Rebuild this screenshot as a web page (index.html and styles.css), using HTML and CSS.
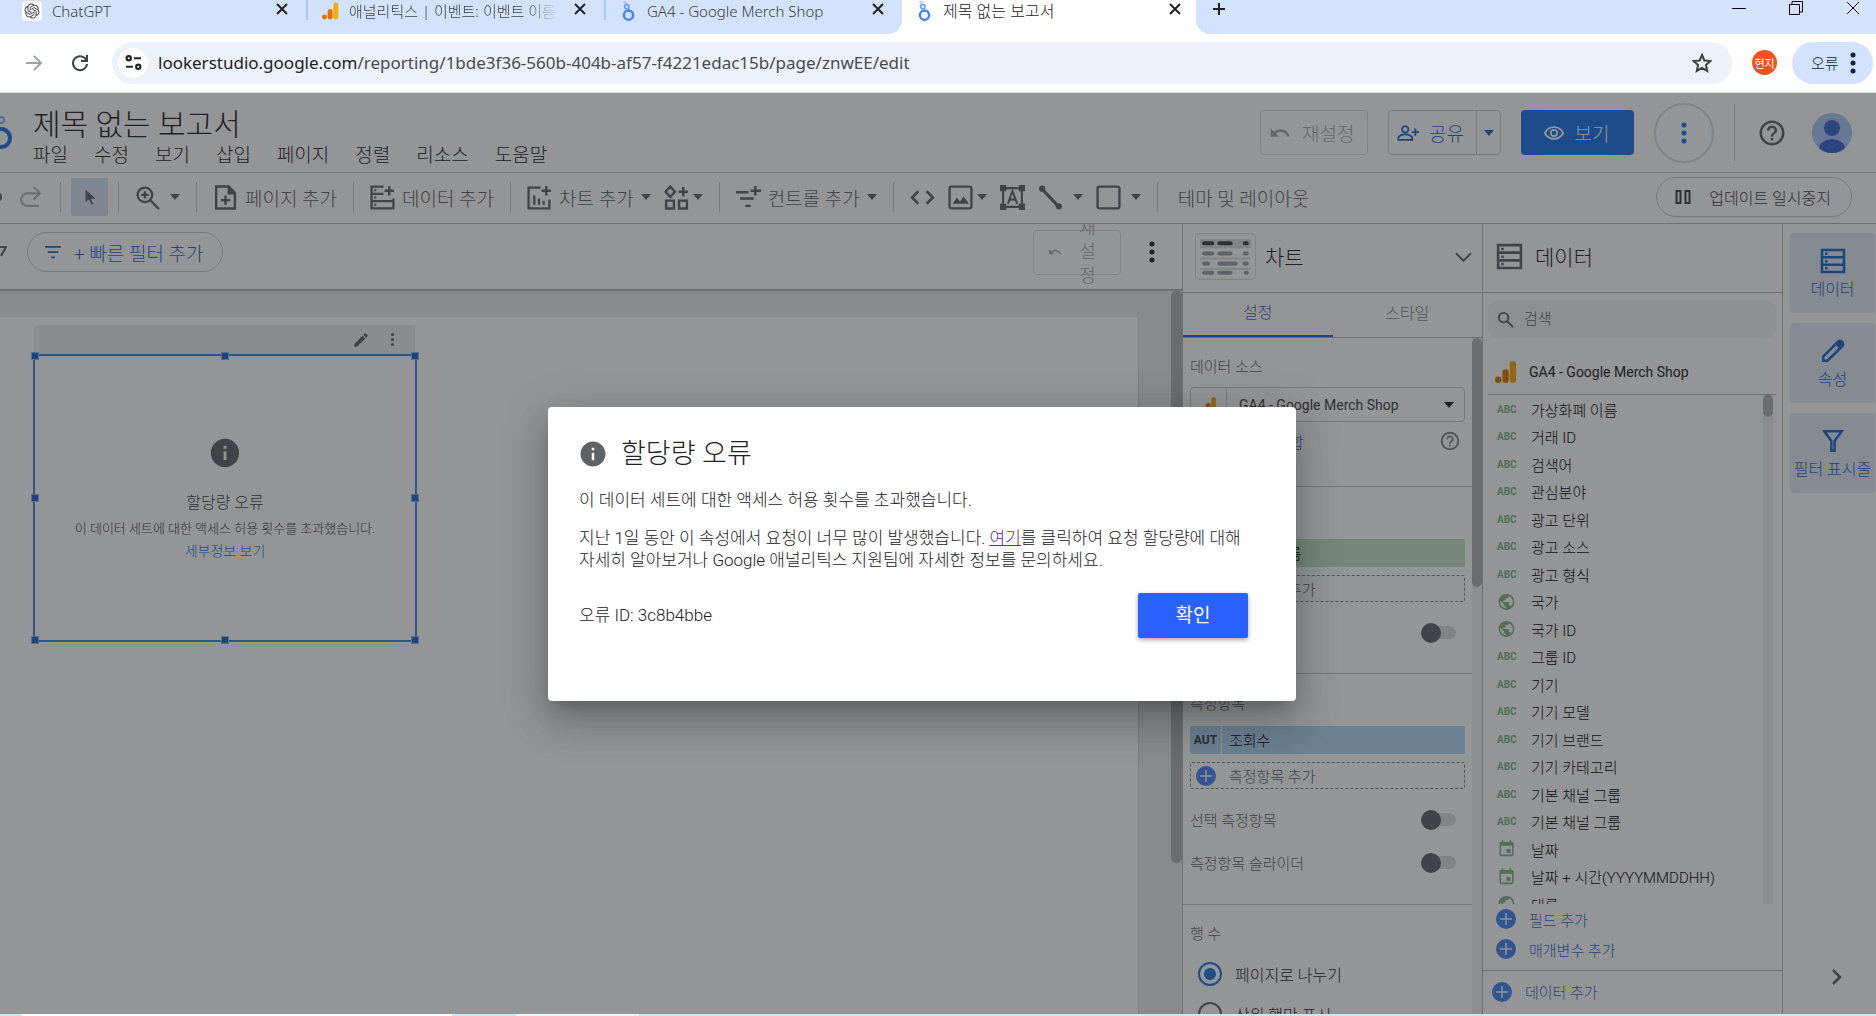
FILE: index.html
```html
<!DOCTYPE html>
<html lang="ko">
<head>
  <meta charset="UTF-8">
  <title>제목 없는 보고서</title>
  <link rel="stylesheet" href="styles.css">
</head>
<body>
  <svg class="sprite" aria-hidden="true">
    <symbol id="close" viewBox="0 0 14 14"><path d="M2 2l10 10M12 2L2 12" fill="none" stroke="currentColor" stroke-width="2"/></symbol>
    <symbol id="looker" viewBox="0 0 16 24"><g fill="none" stroke="#4285f4"><circle cx="8" cy="17" r="5.500" stroke-width="3"/><circle cx="6" cy="7" r="2.600" stroke-width="2" stroke="#669df6"/><circle cx="4" cy="1.500" r="1.500" stroke-width="1.200" stroke="#8ab4f8"/></g></symbol>
    <symbol id="analytics" viewBox="0 0 24 24"><rect x="16" y="0" width="7" height="24" rx="3.5" fill="#f9ab00"/><rect x="8" y="9" width="7" height="15" rx="3.5" fill="#e37400"/><circle cx="3.5" cy="20.5" r="3.5" fill="#e37400"/></symbol>
    <symbol id="dots" viewBox="0 0 6 24"><circle cx="3" cy="4" r="2.5"/><circle cx="3" cy="12" r="2.5"/><circle cx="3" cy="20" r="2.5"/></symbol>
    <symbol id="undo" viewBox="0 0 24 24"><path d="M12.5 8c-2.65 0-5.05.99-6.9 2.6L2 7v9h9l-3.62-3.62c1.39-1.16 3.16-1.88 5.12-1.88 3.54 0 6.55 2.31 7.6 5.5l2.37-.78C21.08 11.03 17.15 8 12.5 8z"/></symbol>
    <symbol id="help" viewBox="0 0 24 24"><path d="M11 18h2v-2h-2v2zm1-16C6.48 2 2 6.48 2 12s4.48 10 10 10 10-4.480 10-10S17.520 2 12 2zm0 18c-4.410 0-8-3.590-8-8s3.590-8 8-8 8 3.590 8 8-3.590 8-8 8zm0-14c-2.210 0-4 1.790-4 4h2c0-1.100.9-2 2-2s2 .9 2 2c0 2-3 1.750-3 5h2c0-2.250 3-2.500 3-5 0-2.210-1.790-4-4-4z"/></symbol>
    <symbol id="info" viewBox="0 0 24 24"><path d="M12 2C6.48 2 2 6.480 2 12s4.480 10 10 10 10-4.480 10-10S17.520 2 12 2zm1 15h-2v-6h2v6zm0-8h-2V7h2v2z"/></symbol>
    <symbol id="rows" viewBox="0 0 26 26"><path d="M2 2h22v22H2zM2 9.300h22M2 16.700h22" fill="none" stroke="currentColor" stroke-width="2.500"/><path d="M5 4.500h2.500v2.500H5zM5 12h2.500v2.500H5zM5 19h2.500v2.500H5z"/></symbol>
    <symbol id="plus" viewBox="0 0 20 20"><circle cx="10" cy="10" r="10"/><path d="M10 4v12M4 10h12" stroke="#fff" stroke-width="1.500"/></symbol>
    <symbol id="globe" viewBox="0 0 24 24"><path d="M12 2C6.480 2 2 6.480 2 12s4.480 10 10 10 10-4.480 10-10S17.520 2 12 2zm-1 17.930c-3.950-.49-7-3.850-7-7.930 0-.62.08-1.210.21-1.790L9 15v1c0 1.100.9 2 2 2v1.930zm6.900-2.540c-.26-.81-1-1.390-1.900-1.390h-1v-3c0-.55-.45-1-1-1H8v-2h2c.55 0 1-.45 1-1V7h2c1.100 0 2-.9 2-2v-.41c2.930 1.190 5 4.060 5 7.410 0 2.080-.8 3.970-2.100 5.390z"/></symbol>
    <symbol id="date" viewBox="0 0 24 24"><path d="M17 12h-5v5h5v-5zM16 1v2H8V1H6v2H5c-1.110 0-1.990.9-1.990 2L3 19c0 1.100.89 2 2 2h14c1.100 0 2-.9 2-2V5c0-1.100-.9-2-2-2h-1V1h-2zm3 18H5V8h14v11z"/></symbol>
    <symbol id="filter" viewBox="0 0 20 16"><path d="M1 2h18M4 8h12M8 14h4" fill="none" stroke="currentColor" stroke-width="2"/></symbol>
    <symbol id="pencil" viewBox="0 0 24 24"><path d="M3 17.250V21h3.750L17.810 9.940l-3.750-3.750L3 17.250zM20.710 7.040a1 1 0 0 0 0-1.410l-2.340-2.340a1 1 0 0 0-1.410 0l-1.830 1.830 3.750 3.750 1.830-1.830z"/></symbol>
  </svg>

  <div class="tab-strip">
    <div class="tab">
      <svg class="gpt-icon" viewBox="-4 -4 32 32"><path d="M22.2819 9.8211a5.9847 5.9847 0 0 0-.5157-4.9108 6.0462 6.0462 0 0 0-6.5098-2.9A6.0651 6.0651 0 0 0 4.9807 4.1818a5.9847 5.9847 0 0 0-3.9977 2.9 6.0462 6.0462 0 0 0 .7427 7.0966 5.98 5.98 0 0 0 .511 4.9107 6.051 6.051 0 0 0 6.5146 2.9001A5.9847 5.9847 0 0 0 13.2599 24a6.0557 6.0557 0 0 0 5.7718-4.2058 5.9894 5.9894 0 0 0 3.9977-2.9001 6.0557 6.0557 0 0 0-.7475-7.0729zm-9.022 12.6081a4.4755 4.4755 0 0 1-2.8764-1.0408l.1419-.0804 4.7783-2.7582a.7948.7948 0 0 0 .3927-.6813v-6.7369l2.02 1.1686a.071.071 0 0 1 .038.052v5.5826a4.504 4.504 0 0 1-4.4945 4.4944zm-9.6607-4.1254a4.4708 4.4708 0 0 1-.5346-3.0137l.142.0852 4.783 2.7582a.7712.7712 0 0 0 .7806 0l5.8428-3.3685v2.3324a.0804.0804 0 0 1-.0332.0615L9.74 19.9502a4.4992 4.4992 0 0 1-6.1408-1.6464zM2.3408 7.8956a4.485 4.485 0 0 1 2.3655-1.9728V11.6a.7664.7664 0 0 0 .3879.6765l5.8144 3.3543-2.0201 1.1685a.0757.0757 0 0 1-.071 0l-4.8303-2.7865A4.504 4.504 0 0 1 2.3408 7.872zm16.5963 3.8558L13.1038 8.364 15.1192 7.2a.0757.0757 0 0 1 .071 0l4.8303 2.7913a4.4944 4.4944 0 0 1-.6765 8.1042v-5.6772a.79.79 0 0 0-.407-.667zm2.0107-3.0231l-.142-.0852-4.7735-2.7818a.7759.7759 0 0 0-.7854 0L9.409 9.2297V6.8974a.0662.0662 0 0 1 .0284-.0615l4.8303-2.7866a4.4992 4.4992 0 0 1 6.6802 4.66zM8.3065 12.863l-2.02-1.1638a.0804.0804 0 0 1-.038-.0567V6.0742a4.4992 4.4992 0 0 1 7.3757-3.4537l-.142.0805L8.704 5.459a.7948.7948 0 0 0-.3927.6813zm1.0976-2.3654l2.602-1.4998 2.6069 1.4998v2.9994l-2.5974 1.4997-2.6067-1.4997Z"/></svg>
      <span class="tab-title">ChatGPT</span>
      <button class="tab-close" aria-label="닫기"><svg><use href="#close"/></svg></button>
    </div>
    <div class="tab divided">
      <svg class="tab-icon"><use href="#analytics"/></svg>
      <span class="tab-title fade">애널리틱스 | 이벤트: 이벤트 이름</span>
      <button class="tab-close" aria-label="닫기"><svg><use href="#close"/></svg></button>
    </div>
    <div class="tab divided">
      <svg class="tab-icon"><use href="#looker"/></svg>
      <span class="tab-title">GA4 - Google Merch Shop</span>
      <button class="tab-close" aria-label="닫기"><svg><use href="#close"/></svg></button>
    </div>
    <div class="tab active">
      <svg class="tab-icon"><use href="#looker"/></svg>
      <span class="tab-title">제목 없는 보고서</span>
      <button class="tab-close" aria-label="닫기"><svg><use href="#close"/></svg></button>
    </div>
    <button class="new-tab" aria-label="새 탭"><svg viewBox="0 0 14 14"><path d="M7 1v12M1 7h12" stroke="currentColor" stroke-width="2"/></svg></button>
    <div class="window-buttons">
      <svg viewBox="0 0 14 14"><path d="M0 7.500h14" stroke="#000"/></svg>
      <svg viewBox="0 0 14 14"><path d="M.5 3.500h10v10H.5zM3 3V.500h10.500V11H11" fill="none" stroke="#000"/></svg>
      <svg viewBox="0 0 14 14"><path d="M1 1l12 12M13 1L1 13" stroke="#000"/></svg>
    </div>
  </div>

  <div class="address-row">
    <button class="nav-button forward" aria-label="앞으로"><svg viewBox="0 0 18 18"><path d="M1 9h15M9 2l7 7-7 7" fill="none" stroke="currentColor" stroke-width="2"/></svg></button>
    <button class="nav-button" aria-label="새로고침"><svg viewBox="0 0 18 18"><path d="M15.500 6.500A7 7 0 1 0 16 10M16 1v6h-6" fill="none" stroke="currentColor" stroke-width="2"/></svg></button>
    <div class="omnibox">
      <span class="site-info"><svg viewBox="0 0 16 16"><g fill="none" stroke="#202124" stroke-width="2"><circle cx="3.500" cy="4" r="2"/><path d="M8.500 4H15M1 12h6.500"/><circle cx="12.500" cy="12" r="2"/></g></svg></span>
      <span class="url"><b>lookerstudio.google.com</b>/reporting/1bde3f36-560b-404b-af57-f4221edac15b/page/znwEE/edit</span>
      <svg class="star" viewBox="0 0 20 20"><path d="M10 2l2.400 5.500 6 .5-4.500 4 1.300 5.900L10 14.800l-5.200 3.100L6.100 12 1.600 8l6-.5z" fill="none" stroke="#3c4043" stroke-width="2"/></svg>
    </div>
    <span class="profile">현지</span>
    <button class="error-menu">오류 <svg class="dots"><use href="#dots"/></svg></button>
  </div>

  <div class="app">
    <header class="header">
      <svg class="logo" viewBox="0 0 12 34"><g fill="none" stroke="#1a73e8"><circle cx="1" cy="22" r="9" stroke-width="4"/><circle cx="1" cy="4" r="3" stroke-width="2" stroke="#8ab4f8"/></g></svg>
      <div class="title-block">
        <h1>제목 없는 보고서</h1>
        <nav class="menu">
          <a href="#">파일</a><a href="#">수정</a><a href="#">보기</a><a href="#">삽입</a><a href="#">페이지</a><a href="#">정렬</a><a href="#">리소스</a><a href="#">도움말</a>
        </nav>
      </div>
      <button class="outline-button reset"><svg class="icon"><use href="#undo"/></svg>재설정</button>
      <div class="share">
        <button class="share-main"><svg class="icon" viewBox="0 0 24 24"><g fill="none" stroke="currentColor" stroke-width="2"><circle cx="9" cy="8" r="3.500"/><path d="M1.500 19.500v-2c0-2.500 4-4 7.500-4s7.500 1.500 7.500 4v2zM20 7v8M16 11h8"/></g></svg>공유</button>
        <button class="share-more" aria-label="공유 옵션"><i class="caret"></i></button>
      </div>
      <button class="view-button"><svg class="icon" viewBox="0 0 24 24"><g fill="none" stroke="currentColor" stroke-width="2"><path d="M2 12c2-4 5.500-6.500 10-6.500S20 8 22 12c-2 4-5.500 6.500-10 6.500S4 16 2 12z"/><circle cx="12" cy="12" r="3.500"/></g></svg>보기</button>
      <button class="more-button" aria-label="더보기"><svg class="dots"><use href="#dots"/></svg></button>
      <div class="account">
        <svg class="help"><use href="#help"/></svg>
        <svg class="avatar" viewBox="0 0 40 40"><clipPath id="round"><circle cx="20" cy="20" r="20"/></clipPath><g clip-path="url(#round)"><path fill="#a8c7fa" d="M0 0h40v40H0z"/><circle cx="20" cy="15" r="8" fill="#3b66d1"/><ellipse cx="20" cy="36" rx="13" ry="10" fill="#3b66d1"/></g></svg>
      </div>
    </header>

    <div class="toolbar">
      <div class="group history">
        <svg class="undo-edge" viewBox="0 0 2 8"><path d="M0 0c1.500 1 2 2.500 2 4s-.5 3-2 4z"/></svg>
        <button class="tool disabled" aria-label="다시 실행"><svg viewBox="0 0 24 24"><path d="M21 8H9a6 6 0 0 0 0 12h11M15 2l6 6-6 6" fill="none" stroke="currentColor" stroke-width="2"/></svg></button>
      </div>
      <div class="group pointer">
        <button class="tool selected" aria-label="선택"><svg viewBox="0 0 24 24"><path d="M6 2l13 12-6 .5 3.500 6.500-2.500 1-3.300-7L6 19z"/></svg></button>
      </div>
      <div class="group">
        <button class="tool loose" aria-label="확대"><svg viewBox="0 0 24 24"><g fill="none" stroke="currentColor" stroke-width="2.200"><circle cx="9.500" cy="9.500" r="7"/><path d="M15 15l8 8M9.500 6v7M6 9.500h7"/></g></svg><i class="caret"></i></button>
      </div>
      <div class="group">
        <button class="tool"><svg viewBox="0 0 24 24"><path d="M3 1.500h12l6 6v15H3zM12 10v9M7.500 14.500h9" fill="none" stroke="currentColor" stroke-width="2.300"/><path d="M14 1v8h7z"/></svg>페이지 추가</button>
      </div>
      <div class="group">
        <button class="tool"><svg viewBox="0 0 24 24"><path d="M13 1.500H1.500v21h21V13M1.500 8.500H13M1.500 15.500h21M18.500 1v9M14 5.500h9" fill="none" stroke="currentColor" stroke-width="2.200"/><path d="M4 4h2v2H4zM4 11h2v2H4zM4 18h2v2H4z"/></svg>데이터 추가</button>
      </div>
      <div class="group">
        <button class="tool"><svg viewBox="0 0 24 24"><path d="M13 2.500H1.500v20h20V14M18.500 1v9M14 5.500h9M7 10v9M11.500 13v6M16 15v4" fill="none" stroke="currentColor" stroke-width="2.200"/></svg>차트 추가<i class="caret"></i></button>
        <button class="tool tight" aria-label="커뮤니티 시각화"><svg viewBox="0 0 24 24"><path d="M6 1.500l4.500 5L6 11.500l-4.500-5zM2 15h7.500v7.500H2zM14.500 15H22v7.500h-7.500zM18.500 2v9M14 6.500h9" fill="none" stroke="currentColor" stroke-width="2.300"/></svg><i class="caret"></i></button>
      </div>
      <div class="group">
        <button class="tool"><svg viewBox="0 0 24 24"><path d="M0 7h12M4 13h13M9 20h5M18.500 1v9M14 5.500h10" fill="none" stroke="currentColor" stroke-width="2.300"/></svg>컨트롤 추가<i class="caret"></i></button>
      </div>
      <div class="group">
        <button class="tool" aria-label="URL 삽입"><svg viewBox="0 0 24 24"><path d="M8 6l-6 6 6 6M16 6l6 6-6 6" fill="none" stroke="currentColor" stroke-width="2.500"/></svg></button>
        <button class="tool tight" aria-label="이미지"><svg viewBox="0 0 24 24"><rect x="1.500" y="1.500" width="21" height="21" rx="2" fill="none" stroke="currentColor" stroke-width="2.200"/><path d="M4.500 18l4-6 3 4 3.500-5 5 7z"/></svg><i class="caret"></i></button>
        <button class="tool" aria-label="텍스트"><svg viewBox="0 0 24 24"><path d="M3 3h18v18H3z" fill="none" stroke="currentColor" stroke-width="2"/><path d="M0 0h6v6H0zM18 0h6v6h-6zM0 18h6v6H0zM18 18h6v6h-6z"/><path d="M7.500 18L12 6l4.500 12M9 14h6" fill="none" stroke="currentColor" stroke-width="2"/></svg></button>
        <button class="tool loose" aria-label="선"><svg viewBox="0 0 24 24"><path d="M4 4l16 17" stroke="currentColor" stroke-width="3"/><circle cx="4" cy="3.500" r="3"/><circle cx="20" cy="20.500" r="3"/></svg><i class="caret"></i></button>
        <button class="tool loose" aria-label="도형"><svg viewBox="0 0 24 24"><rect x="1.500" y="1.500" width="21" height="21" rx="2" fill="none" stroke="currentColor" stroke-width="2.200"/></svg><i class="caret"></i></button>
      </div>
      <div class="group">
        <button class="tool">테마 및 레이아웃</button>
      </div>
      <button class="pause-button"><svg viewBox="0 0 16 16"><path d="M1.500 2h4v12h-4zM10.500 2h4v12h-4z" fill="none" stroke="currentColor" stroke-width="2"/></svg>업데이트 일시중지</button>
    </div>

    <div class="workspace">
      <main class="editor">
        <div class="filter-bar">
          <svg class="funnel" viewBox="0 0 7 12"><path d="M0 1h6L1 10" fill="none" stroke="#5f6368" stroke-width="2"/></svg>
          <button class="chip"><svg><use href="#filter"/></svg>+ 빠른 필터 추가</button>
          <button class="small-reset"><svg><use href="#undo"/></svg><span>재설정</span></button>
          <svg class="dots"><use href="#dots"/></svg>
        </div>
        <div class="canvas">
          <div class="page">
            <div class="widget-bar"><svg><use href="#pencil"/></svg><svg class="dots"><use href="#dots"/></svg></div>
            <div class="widget">
              <i class="handle nw"></i><i class="handle n"></i><i class="handle ne"></i><i class="handle w"></i><i class="handle e"></i><i class="handle sw"></i><i class="handle s"></i><i class="handle se"></i>
              <svg class="widget-info"><use href="#info"/></svg>
              <p class="widget-title">할당량 오류</p>
              <p class="widget-text">이 데이터 세트에 대한 액세스 허용 횟수를 초과했습니다.</p>
              <a href="#" class="widget-link">세부정보 보기</a>
            </div>
          </div>
          <div class="canvas-scroll"><div class="thumb"></div></div>
        </div>
      </main>

      <aside class="panel">
        <div class="panel-head">
          <svg class="table-thumb" viewBox="0 0 60 46"><rect x=".5" y=".5" width="59" height="45" rx="4" fill="#fff" stroke="#dadce0"/><path fill="#dadce0" d="M5 6h50v9H5zM5 24h50v2H5zM5 34h50v2H5z"/><path d="M9 10h8M24 10h11M49 10h2" stroke="#3c4043" stroke-width="4" stroke-linecap="round"/><path d="M9 20h8M24 20h11M49 20h2M9 30h4M24 30h16M49 30h2M9 39h8M24 39h11M50 39h1" stroke="#9aa0a6" stroke-width="4" stroke-linecap="round"/></svg>
          <h2>차트</h2>
          <svg class="chevron" viewBox="0 0 18 10"><path d="M1 1l8 8 8-8" fill="none" stroke="currentColor" stroke-width="2"/></svg>
        </div>
        <div class="panel-tabs">
          <button class="panel-tab current">설정</button>
          <button class="panel-tab">스타일</button>
        </div>
        <div class="panel-body">
          <div class="properties">
            <section>
              <label class="caption" for="source">데이터 소스</label>
              <div class="source-box">
                <svg><use href="#analytics"/></svg>
                <select id="source"><option>GA4 - Google Merch Shop</option></select>
                <i class="caret"></i>
              </div>
              <div class="blend"><a href="#">데이터 혼합</a><svg><use href="#help"/></svg></div>
            </section>
            <section class="dimension">
              <h3 class="caption">측정기준</h3>
              <div class="field green"><b>ABC</b><span>이벤트 이름</span></div>
              <button class="add-field"><svg><use href="#plus"/></svg>측정기준 추가</button>
              <label class="switch">드릴다운<input type="checkbox"></label>
            </section>
            <section class="metric">
              <h3 class="caption">측정항목</h3>
              <div class="field blue"><b>AUT</b><span>조회수</span></div>
              <button class="add-field"><svg><use href="#plus"/></svg>측정항목 추가</button>
              <label class="switch">선택 측정항목<input type="checkbox"></label>
              <label class="switch">측정항목 슬라이더<input type="checkbox"></label>
            </section>
            <section class="row-count">
              <h3 class="caption">행 수</h3>
              <label class="radio"><input type="radio" name="rows" checked>페이지로 나누기</label>
              <label class="radio"><input type="radio" name="rows">상위 행만 표시</label>
            </section>
          </div>
          <div class="panel-scroll"><div class="thumb"></div></div>
        </div>
      </aside>

      <aside class="panel data-panel">
        <div class="panel-head">
          <svg class="rows-icon"><use href="#rows"/></svg>
          <h2>데이터</h2>
        </div>
        <div class="search">
          <svg viewBox="0 0 18 18"><g fill="none" stroke="currentColor" stroke-width="2"><circle cx="7" cy="7" r="5"/><path d="M11 11l6 6"/></g></svg>
          <input type="text" placeholder="검색" aria-label="검색">
        </div>
        <div class="data-source"><svg><use href="#analytics"/></svg>GA4 - Google Merch Shop</div>
        <div class="field-area">
          <ul class="fields">
            <li><b>ABC</b>가상화폐 이름</li>
            <li><b>ABC</b>거래 ID</li>
            <li><b>ABC</b>검색어</li>
            <li><b>ABC</b>관심분야</li>
            <li><b>ABC</b>광고 단위</li>
            <li><b>ABC</b>광고 소스</li>
            <li><b>ABC</b>광고 형식</li>
            <li><svg><use href="#globe"/></svg>국가</li>
            <li><svg><use href="#globe"/></svg>국가 ID</li>
            <li><b>ABC</b>그룹 ID</li>
            <li><b>ABC</b>기기</li>
            <li><b>ABC</b>기기 모델</li>
            <li><b>ABC</b>기기 브랜드</li>
            <li><b>ABC</b>기기 카테고리</li>
            <li><b>ABC</b>기본 채널 그룹</li>
            <li><b>ABC</b>기본 채널 그룹</li>
            <li><svg><use href="#date"/></svg>날짜</li>
            <li><svg><use href="#date"/></svg>날짜 + 시간(YYYYMMDDHH)</li>
            <li><svg><use href="#globe"/></svg>대륙</li>
          </ul>
          <div class="field-scroll"><div class="thumb"></div></div>
        </div>
        <div class="field-actions">
          <button class="link-button"><svg><use href="#plus"/></svg>필드 추가</button>
          <button class="link-button"><svg><use href="#plus"/></svg>매개변수 추가</button>
        </div>
        <div class="data-foot"><button class="link-button"><svg><use href="#plus"/></svg>데이터 추가</button></div>
      </aside>

      <nav class="rail">
        <button class="rail-card"><svg><use href="#rows"/></svg>데이터</button>
        <button class="rail-card"><svg viewBox="0 0 24 24"><path d="M3 21v-4L16.500 3.500l4 4L7 21z" fill="none" stroke="currentColor" stroke-width="2.300"/><path d="M14 6l3-4c2-2 7 2 5 5l-4 3z"/></svg>속성</button>
        <button class="rail-card"><svg viewBox="0 0 24 24"><path d="M4 3h16l-6.500 9v9h-3v-9z" fill="none" stroke="currentColor" stroke-width="2.300"/></svg>필터 표시줄</button>
        <svg class="collapse" viewBox="0 0 10 16"><path d="M1 1l7 7-7 7" fill="none" stroke="currentColor" stroke-width="2.500"/></svg>
      </nav>
    </div>

    <div class="scrim">
      <div class="dialog" role="dialog" aria-labelledby="dialog-title">
        <h2 id="dialog-title"><svg><use href="#info"/></svg>할당량 오류</h2>
        <p>이 데이터 세트에 대한 액세스 허용 횟수를 초과했습니다.</p>
        <p>지난 1일 동안 이 속성에서 요청이 너무 많이 발생했습니다. <a href="#">여기</a>를 클릭하여 요청 할당량에 대해 자세히 알아보거나 Google 애널리틱스 지원팀에 자세한 정보를 문의하세요.</p>
        <div class="dialog-foot">
          <span>오류 ID: 3c8b4bbe</span>
          <button>확인</button>
        </div>
      </div>
    </div>
  </div>
  <div class="taskbar"></div>
</body>
</html>
```

FILE: styles.css
```css
* {
  box-sizing: border-box;
}

body {
  margin: 0;
  height: 100vh;
  display: flex;
  flex-direction: column;
  overflow: hidden;
  font-family: Roboto, 'Noto Sans CJK KR', sans-serif;
  font-size: 15px;
  font-weight: 300;
  color: #202124;
}

h1, h2, h3, p, ul {
  margin: 0;
  padding: 0;
  font-weight: 300;
}

a {
  color: inherit;
  text-decoration: none;
}

button {
  font-family: inherit;
  font-size: inherit;
  font-weight: inherit;
  color: inherit;
  background: none;
  border: none;
  padding: 0;
  white-space: nowrap;
}

svg {
  display: block;
  flex: none;
  fill: currentColor;
}

.sprite {
  position: absolute;
  width: 0;
  height: 0;
}

.dots {
  width: 6px;
  height: 24px;
}

.caret {
  flex: none;
  border: 5px solid transparent;
  border-top: 6px solid currentColor;
  border-bottom: 0;
}

/* browser */
.tab-strip {
  flex: none;
  display: flex;
  height: 34px;
  padding-left: 8px;
  background: #d3e3fd;
  font-family: 'Noto Sans', 'Noto Sans CJK KR', sans-serif;
  font-size: 15px;
}

.tab {
  position: relative;
  flex: 0 1 298px;
  display: flex;
  align-items: center;
  height: 34px;
  padding: 0 17px 12px 14px;
  color: #3c4043;
}

.tab.divided {
  padding-left: 16px;
}

.tab.divided::before {
  content: '';
  position: absolute;
  left: 0;
  top: 0;
  width: 2px;
  height: 20px;
  background: #a8c7fa;
}

.tab.active {
  flex-basis: 294px;
  padding-right: 14px;
  background: #fff;
  color: #202124;
  font-size: 16px;
}

.tab.active::before,
.tab.active::after {
  content: '';
  position: absolute;
  bottom: 0;
  width: 14px;
  height: 14px;
}

.tab.active::before {
  right: 100%;
  background: radial-gradient(circle at 0 0, transparent 14px, #fff 14px);
}

.tab.active::after {
  left: 100%;
  background: radial-gradient(circle at 100% 0, transparent 14px, #fff 14px);
}

.gpt-icon {
  width: 20px;
  height: 20px;
  margin-right: 10px;
  border-radius: 4px;
  background: #fff;
}

.tab-icon {
  width: 17px;
  height: 20px;
  margin-right: 10px;
}

.tab-title {
  flex: 1;
  overflow: hidden;
  white-space: nowrap;
  line-height: 22px;
}

.tab-title.fade {
  -webkit-mask-image: linear-gradient(to right, #000 85%, transparent);
  mask-image: linear-gradient(to right, #000 85%, transparent);
}

.tab-close {
  margin: 0 0 4px 16px;
  color: #202124;
}

.tab-close svg {
  width: 14px;
  height: 14px;
}

.new-tab {
  height: 18px;
  margin-left: 16px;
}

.new-tab svg {
  width: 14px;
  height: 14px;
}

.window-buttons {
  display: flex;
  gap: 43px;
  margin: 1px 16px 0 auto;
}

.window-buttons svg {
  width: 14px;
  height: 14px;
}

.address-row {
  flex: none;
  display: flex;
  align-items: center;
  height: 59px;
  padding: 0 3px 1px 25px;
  border-bottom: 1px solid #e0e2dc;
  background: #fff;
}

.nav-button {
  margin-right: 28px;
  color: #3c4043;
}

.nav-button + .nav-button {
  margin-right: 23px;
}

.nav-button svg {
  width: 18px;
  height: 18px;
}

.nav-button.forward {
  color: #a0a3a6;
}

.omnibox {
  flex: 1;
  display: flex;
  align-items: center;
  height: 42px;
  padding: 0 20px 0 6px;
  border-radius: 21px;
  background: #ecf1fa;
}

.site-info {
  display: grid;
  place-items: center;
  width: 30px;
  height: 30px;
  margin-right: 10px;
  border-radius: 50%;
  background: #fff;
}

.site-info svg {
  width: 17px;
  height: 17px;
}

.url {
  flex: 1;
  font-family: 'Noto Sans', sans-serif;
  font-size: 17px;
  font-weight: 400;
  color: #474b50;
}

.url b {
  font-weight: 400;
  color: #202124;
}

.star {
  width: 20px;
  height: 20px;
}

.profile {
  display: grid;
  place-items: center;
  width: 25px;
  height: 25px;
  margin: 0 15px 0 20px;
  border-radius: 50%;
  background: #f4511e;
  color: #fff;
  font-size: 11px;
  font-weight: 400;
}

.error-menu {
  display: flex;
  align-items: center;
  justify-content: space-between;
  width: 81px;
  height: 42px;
  padding: 0 17px 0 19px;
  border-radius: 21px;
  background: #d3e3fd;
  color: #041e49;
}

/* report editor */
.app {
  position: relative;
  flex: 1;
  min-height: 0;
  display: flex;
  flex-direction: column;
  overflow: hidden;
  background: #fff;
}

.header {
  flex: none;
  display: flex;
  align-items: center;
  height: 80px;
  padding-right: 24px;
  border-bottom: 1px solid #c8cacd;
  font-size: 19px;
}

.logo {
  width: 12px;
  height: 34px;
  margin-right: 21px;
}

.title-block {
  flex: 1;
  padding-top: 10px;
}

h1 {
  font-size: 30px;
  line-height: 36px;
}

.menu {
  display: flex;
  gap: 26px;
  line-height: 26px;
}

.icon {
  width: 22px;
  height: 22px;
}

.outline-button,
.share,
.view-button {
  display: flex;
  align-items: center;
  height: 45px;
  border-radius: 4px;
}

.outline-button {
  gap: 11px;
  width: 108px;
  padding-left: 8px;
  border: 1px solid #dadce0;
  color: #a6a9ad;
}

.share {
  margin: 0 20px;
  border: 1px solid #c8cacd;
  color: #1a67d2;
}

.share-main {
  display: flex;
  align-items: center;
  gap: 10px;
  width: 88px;
  height: 43px;
  padding-left: 8px;
  border-right: 1px solid #c8cacd;
}

.share-more {
  display: grid;
  place-items: center;
  width: 23px;
  height: 43px;
}

.view-button {
  gap: 10px;
  justify-content: center;
  width: 113px;
  padding-right: 3px;
  background: #1a73e8;
  color: #fff;
}

.more-button {
  display: grid;
  place-items: center;
  width: 60px;
  height: 60px;
  margin: 0 20px;
  border: 2px solid #dadce0;
  border-radius: 50%;
  color: #1a73e8;
}

.account {
  display: flex;
  align-items: center;
  gap: 25px;
  height: 57px;
  padding-left: 22px;
  border-left: 1px solid #c8cacd;
}

.help {
  width: 30px;
  height: 30px;
  color: #5f6368;
}

.avatar {
  width: 40px;
  height: 40px;
}

.toolbar {
  flex: none;
  display: flex;
  align-items: center;
  height: 51px;
  padding: 0 24px 2px 0;
  border-bottom: 1px solid #b4b6b9;
  font-size: 19px;
  color: #5f6368;
}

.group {
  display: flex;
  align-items: center;
  gap: 13px;
  height: 30px;
  padding: 0 16px;
  border-right: 1px solid #c8cacd;
}

.group:nth-last-child(2) {
  border-right: none;
  padding-left: 20px;
}

.group.history {
  gap: 16px;
  width: 61px;
  padding: 0;
}

.undo-edge {
  width: 2px;
  height: 8px;
}

.group.pointer {
  padding: 0 10px;
}

.tool {
  display: flex;
  align-items: center;
  gap: 7px;
}

.tool svg {
  width: 25px;
  height: 25px;
}

.tool.tight {
  gap: 4px;
}

.tool.loose {
  gap: 10px;
}

.tool.disabled {
  color: #b4b6b9;
}

.tool.selected {
  justify-content: center;
  width: 37px;
  height: 38px;
  border-radius: 2px;
  background: #d8e4f7;
}

.tool.selected svg {
  width: 18px;
  height: 20px;
}

.pause-button {
  display: flex;
  align-items: center;
  gap: 18px;
  height: 40px;
  margin-left: auto;
  padding: 0 20px 0 18px;
  border: 1px solid #c8cacd;
  border-radius: 20px;
  font-size: 16px;
  color: #3c4043;
}

.pause-button svg {
  width: 16px;
  height: 16px;
}

.workspace {
  flex: 1;
  min-height: 0;
  display: flex;
}

.editor {
  flex: 1;
  min-width: 0;
  display: flex;
  flex-direction: column;
}

.filter-bar {
  flex: none;
  display: flex;
  align-items: center;
  height: 67px;
  padding: 0 27px 9px 0;
  border-bottom: 2px solid #b4b6b9;
  overflow: hidden;
}

.funnel {
  width: 7px;
  height: 12px;
  margin-right: 20px;
}

.chip {
  display: flex;
  align-items: center;
  gap: 12px;
  height: 40px;
  padding: 0 18px 0 16px;
  border: 1px solid #c8cacd;
  border-radius: 20px;
  font-size: 19px;
  color: #1a67d2;
}

.chip svg {
  width: 18px;
  height: 14px;
}

.small-reset {
  display: flex;
  align-items: center;
  gap: 17px;
  width: 88px;
  height: 45px;
  margin: 0 28px 0 auto;
  padding-left: 14px;
  border: 1px solid #dadce0;
  border-radius: 4px;
  color: #a6a9ad;
}

.small-reset svg {
  width: 14px;
  height: 14px;
}

.small-reset span {
  width: 17px;
  font-size: 18px;
  line-height: 24px;
  white-space: normal;
}

.canvas {
  flex: 1;
  min-height: 0;
  display: flex;
  padding-top: 26px;
  background: #eaeaea;
}

.page {
  flex: 1;
  margin-right: 32px;
  padding: 8px 0 0 33px;
  border-right: 1px solid #d0d0d0;
  background: #fff;
}

.canvas-scroll {
  width: 11px;
  margin-top: -26px;
}

.thumb {
  border-radius: 5px;
  background: #b0b0b0;
}

.canvas-scroll .thumb {
  height: 572px;
}

.widget-bar {
  display: flex;
  align-items: center;
  justify-content: flex-end;
  gap: 20px;
  width: 381px;
  height: 29px;
  margin-left: 1px;
  padding-right: 20px;
  background: #eeeeee;
  color: #5f6368;
}

.widget-bar svg {
  width: 18px;
  height: 18px;
}

.widget-bar .dots {
  width: 5px;
  height: 15px;
}

.widget {
  position: relative;
  display: flex;
  flex-direction: column;
  align-items: center;
  width: 384px;
  height: 288px;
  padding-top: 80px;
  border: 2px solid #3f86ea;
  color: #5f6368;
}

.handle {
  position: absolute;
  width: 8px;
  height: 8px;
  border: 1px solid #8ab4f8;
  background: #1a67d2;
}

.nw, .n, .ne { top: -4px; }
.sw, .s, .se { bottom: -4px; }
.nw, .w, .sw { left: -4px; }
.ne, .e, .se { right: -4px; }
.n, .s { left: calc(50% - 4px); }
.w, .e { top: calc(50% - 4px); }

.widget-info {
  width: 34px;
  height: 34px;
  margin-bottom: 19px;
}

.widget-title,
.widget-text {
  color: #3c4043;
}

.widget-title {
  font-size: 16px;
  line-height: 28px;
}

.widget-text {
  font-size: 13px;
  line-height: 24px;
}

.widget-link {
  font-size: 14px;
  line-height: 20px;
  color: #1a73e8;
}

/* side panels */
.panel {
  flex: none;
  display: flex;
  flex-direction: column;
  width: 300px;
  border-left: 1px solid #b4b6b9;
}

.panel-head {
  flex: none;
  display: flex;
  align-items: center;
  height: 69px;
  padding: 0 10px 3px 12px;
  border-bottom: 1px solid #b4b6b9;
}

.panel-head h2 {
  flex: 1;
  padding-bottom: 2px;
  font-size: 21px;
}

.table-thumb {
  width: 61px;
  height: 47px;
  margin-right: 9px;
}

.chevron {
  width: 17px;
  height: 10px;
  color: #5f6368;
}

.panel-tabs {
  flex: none;
  display: flex;
  height: 45px;
  border-bottom: 1px solid #b4b6b9;
  font-size: 16px;
}

.panel-tab {
  flex: 1;
  padding-bottom: 6px;
  color: #80868b;
}

.panel-tab.current {
  border-bottom: 2px solid #2a62d9;
  color: #2a62d9;
}

.panel-body {
  flex: 1;
  min-height: 0;
  display: flex;
}

.properties {
  flex: 1;
  overflow: hidden;
}

.panel-scroll {
  width: 10px;
  background: #f1f1f1;
}

.panel-scroll .thumb {
  height: 249px;
}

.properties section {
  padding: 18px 7px 0;
  border-bottom: 1px solid #c8cacd;
}

.caption {
  display: block;
  font-size: 15px;
  line-height: 22px;
  color: #5f6368;
}

.source-box {
  display: flex;
  align-items: center;
  height: 35px;
  margin-top: 9px;
  padding-right: 10px;
  border: 1px solid #c8cacd;
  border-radius: 4px;
}

.source-box svg {
  width: 35px;
  height: 16px;
}

.source-box select {
  flex: 1;
  height: 33px;
  padding: 0 0 0 12px;
  border: none;
  border-left: 1px solid #c8cacd;
  appearance: none;
  background: none;
  font-family: inherit;
  font-size: 14px;
  font-weight: 400;
  color: #3c4043;
}

.blend {
  display: flex;
  align-items: center;
  justify-content: space-between;
  height: 38px;
  margin-bottom: 26px;
  padding: 0 4px 0 41px;
  color: #1a67d2;
}

.blend svg {
  width: 22px;
  height: 22px;
  color: #80868b;
}

.field {
  display: flex;
  align-items: center;
  height: 28px;
  margin-top: 11px;
  border-radius: 2px;
  color: #000;
}

.field.green {
  background: #c5e5c9;
}

.field.blue {
  background: #b0d8f5;
}

.field b {
  width: 32px;
  border-right: 1px solid #fff;
  font-size: 12px;
  font-weight: 700;
  line-height: 28px;
  text-align: center;
  color: #3c4043;
}

.field span {
  padding: 0 0 2px 7px;
}

.add-field {
  display: flex;
  align-items: center;
  gap: 13px;
  width: 100%;
  height: 27px;
  margin-top: 8px;
  padding-left: 5px;
  border: 1px dashed #80868b;
  border-radius: 2px;
  color: #5f6368;
}

.add-field svg,
.link-button svg {
  width: 20px;
  height: 20px;
  color: #4285f4;
}

.switch {
  display: flex;
  align-items: center;
  justify-content: space-between;
  height: 43px;
  padding-right: 9px;
  color: #5f6368;
}

.switch input {
  display: flex;
  align-items: center;
  appearance: none;
  width: 31px;
  height: 13px;
  margin: 0;
  border-radius: 7px;
  background: #dddddd;
}

.switch input::before {
  content: '';
  width: 20px;
  height: 20px;
  margin-left: -4px;
  border-radius: 50%;
  background: #5f6368;
}

.add-field + .switch {
  margin-top: 9px;
}

.properties .dimension {
  padding: 19px 7px;
}

.properties .metric {
  padding-top: 19px;
  padding-bottom: 20px;
}

.properties .row-count {
  border-bottom: none;
}

.radio {
  display: flex;
  align-items: center;
  gap: 13px;
  height: 40px;
  padding-left: 8px;
  font-size: 16px;
}

.row-count .caption {
  margin-bottom: 9px;
}

.radio input {
  display: grid;
  place-items: center;
  appearance: none;
  width: 24px;
  height: 24px;
  margin: 0;
  border: 2px solid #5f6368;
  border-radius: 50%;
}

.radio input:checked {
  border-color: #1a73e8;
}

.radio input:checked::before {
  content: '';
  width: 12px;
  height: 12px;
  border-radius: 50%;
  background: #1a73e8;
}

.rows-icon {
  width: 27px;
  height: 27px;
  margin: 0 12px 0 1px;
  color: #5f6368;
}

.search {
  display: flex;
  align-items: center;
  gap: 10px;
  height: 38px;
  margin: 7px 6px 0 5px;
  padding-left: 9px;
  border-radius: 10px;
  background: #f1f3f4;
  color: #5f6368;
}

.search svg {
  width: 17px;
  height: 17px;
}

.search input {
  flex: 1;
  min-width: 0;
  border: none;
  outline: none;
  padding: 0 0 1px;
  background: none;
  font-family: inherit;
  font-size: 15px;
  font-weight: 300;
}

.search input::placeholder {
  color: #5f6368;
}

.data-source {
  display: flex;
  align-items: center;
  gap: 12px;
  height: 57px;
  margin: 0 6px 0 5px;
  padding: 11px 0 0 7px;
  border-bottom: 1px solid #b4b6b9;
  font-size: 14px;
  font-weight: 400;
}

.data-source svg {
  width: 22px;
  height: 22px;
}

.field-area {
  flex: 1;
  min-height: 0;
  display: flex;
  justify-content: space-between;
  padding: 0 9px 0 14px;
  overflow: hidden;
}

.fields {
  list-style: none;
}

.fields li {
  display: flex;
  align-items: center;
  gap: 15px;
  height: 28px;
  color: #000;
}

.fields li:nth-child(even) {
  height: 27px;
}

.fields b {
  width: 19px;
  font-size: 10px;
  font-weight: 700;
  color: #81b587;
}

.fields svg {
  width: 19px;
  height: 20px;
  color: #81b587;
}

.field-scroll {
  width: 10px;
  background: #f0f0f0;
}

.field-scroll .thumb {
  height: 22px;
}

.field-actions {
  flex: none;
  height: 66px;
  padding-left: 13px;
}

.link-button {
  display: flex;
  align-items: center;
  gap: 13px;
  height: 30px;
  color: #2f6ad8;
}

.data-foot {
  flex: none;
  display: flex;
  align-items: center;
  height: 44px;
  padding: 0 0 2px 9px;
  border-top: 1px solid #b4b6b9;
}

.rail {
  flex: none;
  display: flex;
  flex-direction: column;
  gap: 10px;
  width: 94px;
  padding: 9px 1px 29px 7px;
  border-left: 1px solid #b4b6b9;
}

.rail-card {
  display: flex;
  flex-direction: column;
  align-items: center;
  gap: 2px;
  height: 80px;
  padding-top: 15px;
  border-radius: 4px;
  background: #e4eaf6;
  font-size: 16px;
  color: #1a67d2;
}

.rail-card svg {
  width: 26px;
  height: 26px;
}

.collapse {
  width: 10px;
  height: 16px;
  margin: auto 0 0 42px;
  color: #5f6368;
}

.scrim {
  position: absolute;
  inset: 0 0 0 -32px;
  display: flex;
  align-items: center;
  justify-content: center;
  background: rgba(32, 33, 36, 0.48);
}

.dialog {
  width: 748px;
  max-width: 90%;
  padding: 28px 30px 63px 31px;
  border-radius: 4px;
  background: #fff;
  box-shadow: 0 11px 15px -7px rgba(0, 0, 0, 0.2), 0 24px 38px 3px rgba(0, 0, 0, 0.14), 0 9px 46px 8px rgba(0, 0, 0, 0.12);
  font-size: 17px;
  line-height: 22px;
  word-break: keep-all;
}

.dialog h2 {
  display: flex;
  align-items: center;
  gap: 13px;
  margin: 0 0 16px -1px;
  font-size: 27px;
  line-height: 38px;
}

.dialog h2 svg {
  width: 30px;
  height: 30px;
  color: #5f6368;
}

.dialog p {
  margin-bottom: 16px;
}

.dialog a {
  color: #681da8;
  text-decoration: underline;
}

.dialog-foot {
  display: flex;
  align-items: center;
  justify-content: space-between;
  margin-top: 22px;
  padding-right: 18px;
}

.dialog-foot button {
  width: 110px;
  height: 45px;
  padding-bottom: 3px;
  border-radius: 2px;
  background: #2962ff;
  color: #fff;
  font-size: 19px;
  font-weight: 400;
  box-shadow: 0 2px 5px rgba(0, 0, 0, 0.35);
}

.taskbar {
  flex: none;
  height: 2px;
  background: linear-gradient(to right, #cfe6ee 22px, #fff 22px, #fff 452px, #cfe6ee 452px, #cfe6ee 516px, #eef5f7 516px, #eef5f7 639px, #cfe6ee 639px);
}
```
